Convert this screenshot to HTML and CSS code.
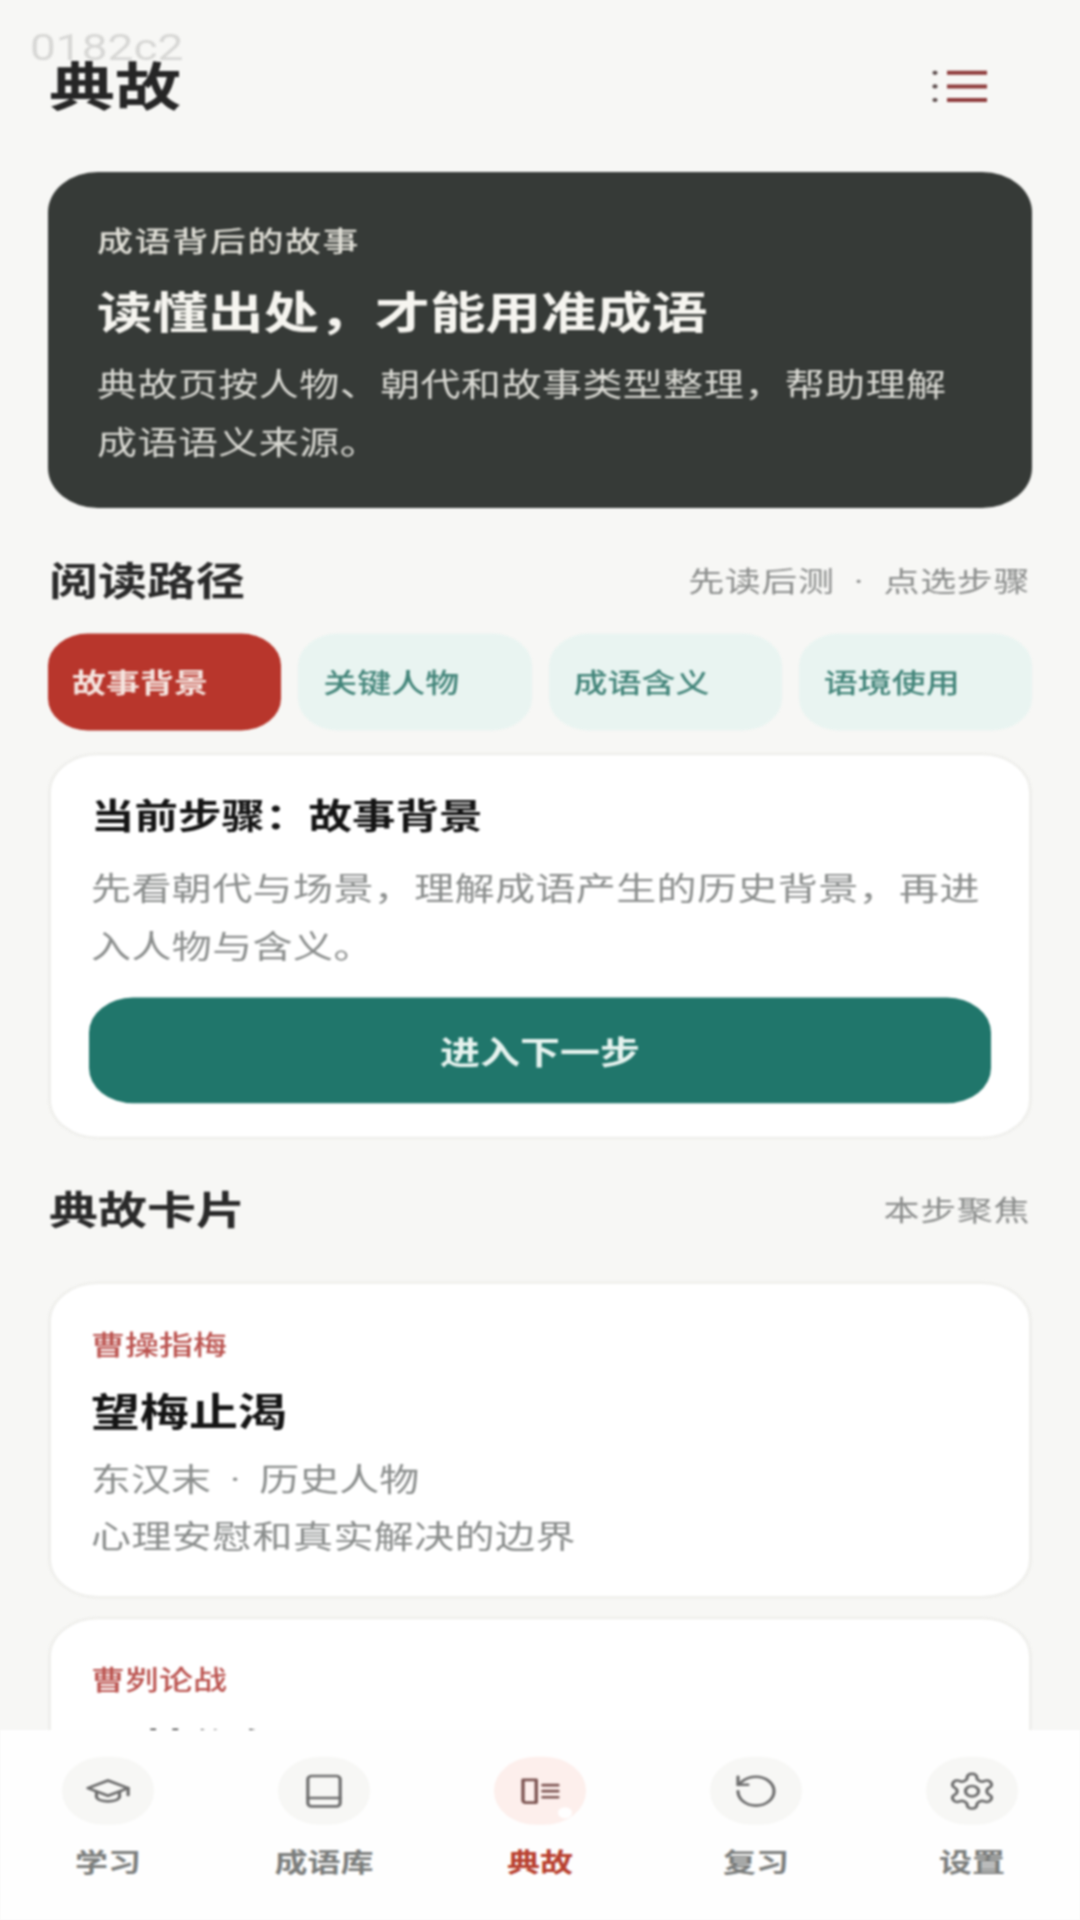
FILE: index.html
```html
<!DOCTYPE html>
<html lang="zh-CN">
<head>
<meta charset="utf-8">
<title>典故</title>
<link rel="stylesheet" href="styles.css">
</head>
<body>
<div class="page">
  <div class="ghost">0182c2</div>
  <main class="scroll">
    <header class="top">
      <h1 class="page-title">典故</h1>
      <svg class="menu" viewBox="0 0 56 44" aria-hidden="true">
        <circle class="menu-dot" cx="4" cy="5" r="2.6"/><circle class="menu-dot" cx="4" cy="22" r="2.6"/><circle class="menu-dot" cx="4" cy="39" r="2.6"/>
        <path class="menu-line" d="M16 5h40M16 22h40M16 39h40"/>
      </svg>
    </header>

    <section class="hero">
      <p class="hero-eyebrow">成语背后的故事</p>
      <h2 class="hero-title">读懂出处，才能用准成语</h2>
      <p class="hero-body">典故页按人物、朝代和故事类型整理，帮助理解成语语义来源。</p>
    </section>

    <div class="sec-head sec-first">
      <h2 class="sec-title">阅读路径</h2>
      <span class="sec-note">先读后测 · 点选步骤</span>
    </div>

    <div class="tabs">
      <div class="tab tab-on">故事背景</div>
      <div class="tab">关键人物</div>
      <div class="tab">成语含义</div>
      <div class="tab">语境使用</div>
    </div>

    <section class="card step">
      <h3 class="step-title">当前步骤：故事背景</h3>
      <p class="step-body">先看朝代与场景，理解成语产生的历史背景，再进入人物与含义。</p>
      <div class="step-btn">进入下一步</div>
    </section>

    <div class="sec-head sec-second">
      <h2 class="sec-title">典故卡片</h2>
      <span class="sec-note">本步聚焦</span>
    </div>

    <section class="card story">
      <p class="story-tag">曹操指梅</p>
      <h3 class="story-title">望梅止渴</h3>
      <p class="story-meta">东汉末 · 历史人物</p>
      <p class="story-desc">心理安慰和真实解决的边界</p>
    </section>

    <section class="card story">
      <p class="story-tag">曹刿论战</p>
      <h3 class="story-title">一鼓作气</h3>
    </section>
  </main>

  <nav class="nav">
    <div class="nav-item">
      <div class="nav-icon">
        <svg class="ico ico-cap" viewBox="0 0 48 36"><path d="M3 14 24 4l21 10-21 10z"/><path d="M12 19v7c3 7 21 7 24 0v-7"/><path d="M45 14v9"/></svg>
      </div>
      <span class="nav-label">学习</span>
    </div>
    <div class="nav-item">
      <div class="nav-icon">
        <svg class="ico ico-book" viewBox="0 0 40 46"><rect x="3" y="3" width="34" height="40" rx="4"/><path d="M3 32h34"/></svg>
      </div>
      <span class="nav-label">成语库</span>
    </div>
    <div class="nav-item nav-on">
      <div class="nav-icon">
        <svg class="ico ico-story" viewBox="0 0 42 36"><path d="M3 3h14v30H6q-3 0-3-3z"/><path d="M24 10h16M24 18h16M24 26h16"/></svg>
        <span class="nav-dot"></span>
      </div>
      <span class="nav-label">典故</span>
    </div>
    <div class="nav-item">
      <div class="nav-icon">
        <svg class="ico ico-redo" viewBox="0 0 24 24"><path d="M3 12a9 9 0 1 0 9-9 9.75 9.75 0 0 0-6.74 2.74L3 8"/><path d="M3 3v5h5"/></svg>
      </div>
      <span class="nav-label">复习</span>
    </div>
    <div class="nav-item">
      <div class="nav-icon">
        <svg class="ico ico-gear" viewBox="0 0 24 24"><path d="M12.22 2h-.44a2 2 0 0 0-2 2v.18a2 2 0 0 1-1 1.73l-.43.25a2 2 0 0 1-2 0l-.15-.08a2 2 0 0 0-2.73.73l-.22.38a2 2 0 0 0 .73 2.73l.15.1a2 2 0 0 1 1 1.72v.51a2 2 0 0 1-1 1.74l-.15.09a2 2 0 0 0-.73 2.73l.22.38a2 2 0 0 0 2.73.73l.15-.08a2 2 0 0 1 2 0l.43.25a2 2 0 0 1 1 1.73V20a2 2 0 0 0 2 2h.44a2 2 0 0 0 2-2v-.18a2 2 0 0 1 1-1.73l.43-.25a2 2 0 0 1 2 0l.15.08a2 2 0 0 0 2.73-.73l.22-.39a2 2 0 0 0-.73-2.73l-.15-.08a2 2 0 0 1-1-1.74v-.5a2 2 0 0 1 1-1.74l.15-.09a2 2 0 0 0 .73-2.73l-.22-.38a2 2 0 0 0-2.73-.73l-.15.08a2 2 0 0 1-2 0l-.43-.25a2 2 0 0 1-1-1.73V4a2 2 0 0 0-2-2z"/><circle cx="12" cy="12" r="3"/></svg>
      </div>
      <span class="nav-label">设置</span>
    </div>
  </nav>
</div>
</body>
</html>
```
FILE: styles.css
```css
* { box-sizing: border-box; margin: 0; padding: 0; }
html, body { width: 1080px; height: 1920px; overflow: hidden; background: #f7f7f5; }
body { font-family: "Noto Sans CJK SC", "Noto Sans", sans-serif; color: #1c1c1c; }

/* The source capture is a 1080x2400 screen squeezed to 1920 tall. */
.page {
  position: relative;
  width: 1080px;
  height: 2400px;
  margin-bottom: -480px;
  overflow: hidden;
  transform: scaleY(0.8);
  transform-origin: 0 0;
  filter: blur(1px);
}
.ghost {
  position: absolute;
  left: 30px;
  top: 27px;
  font: 400 46px/64px Roboto, sans-serif;
  color: #d7d7d5;
}
.scroll { position: relative; padding: 0 48px; }

.top { display: flex; justify-content: space-between; align-items: center; height: 215px; }
.page-title { font-size: 66px; line-height: 80px; font-weight: 700; color: #262626; margin: -9px 0 0 1px; }
.menu { width: 56px; height: 44px; margin-right: 45px; }
.menu-dot { fill: #5a4a4a; }
.menu-line { fill: none; stroke: #8e3a3a; stroke-width: 5; }

.hero { background: #363a37; border-radius: 50px; padding: 59px 49px 46px; height: 420px; }
.hero-eyebrow { font-size: 36px; line-height: 50px; letter-spacing: 1.6px; font-weight: 500; color: #dfded6; }
.hero-title { font-size: 55.5px; line-height: 72px; font-weight: 700; color: #f6f5f0; margin-top: 27px; }
.hero-body { font-size: 40px; line-height: 72px; letter-spacing: 0.45px; color: #d9d9d3; margin-top: 19px; }

.sec-head { display: flex; justify-content: space-between; align-items: center; height: 70px; }
.sec-first { margin-top: 53px; }
.sec-second { margin-top: 50px; }
.sec-title { font-size: 49px; line-height: 70px; font-weight: 700; color: #2a2a2a; margin-left: 1px; }
.sec-note { font-family: Roboto, "Noto Sans CJK SC", sans-serif; font-size: 36px; line-height: 50px; letter-spacing: 0.6px; word-spacing: 10px; color: #8b8d8c; margin: 9px 2px 0 0; }

.tabs { display: grid; grid-template-columns: repeat(4, 1fr); gap: 17px; margin-top: 34px; }
.tab {
  height: 121px;
  display: flex;
  align-items: center;
  padding: 0 0 3px 25px;
  border-radius: 40px;
  background: #e9f4f1;
  color: #43857a;
  font-size: 34px;
  font-weight: 500;
}
.tab-on { background: #b8362c; color: #f5e4df; font-weight: 700; padding-left: 24px; }

.card { background: #fff; border: 3px solid #efefec; border-radius: 50px; }
.step { margin-top: 28px; height: 483px; padding: 44px 38px 38px 40px; }
.step-title { font-size: 43.5px; line-height: 60px; font-weight: 700; color: #141414; }
.step-body { font-size: 40px; line-height: 72px; letter-spacing: 0.4px; color: #8b8e8d; margin-top: 24px; }
.step-btn {
  margin: 31px 0 0 -2px;
  height: 132px;
  border-radius: 44px;
  background: #20766b;
  color: #e6f3ef;
  display: flex;
  align-items: center;
  justify-content: center;
  font-size: 40px;
  font-weight: 700;
}

.story { height: 396px; padding: 50px 40px 0; margin-top: 23px; }
.sec-second + .story { margin-top: 58px; }
.story-tag { font-size: 34px; line-height: 50px; font-weight: 500; color: #bb5450; }
.story-title { font-size: 49px; line-height: 66px; font-weight: 700; color: #141414; margin-top: 24px; }
.story-meta { font-family: Roboto, "Noto Sans CJK SC", sans-serif; font-size: 40px; line-height: 60px; word-spacing: 9px; color: #8a8d8c; margin-top: 26px; }
.story-desc { font-size: 40px; line-height: 60px; letter-spacing: 0.4px; color: #8a8d8c; margin-top: 7px; }

.nav {
  position: absolute;
  left: 0;
  right: 0;
  bottom: 0;
  height: 237px;
  padding-top: 33px;
  background: #fefefe;
  display: grid;
  grid-template-columns: repeat(5, 1fr);
}
.nav-item { display: flex; flex-direction: column; align-items: center; }
.nav-icon {
  position: relative;
  width: 92px;
  height: 85px;
  border-radius: 42px;
  background: #f7f7f5;
  display: flex;
  align-items: center;
  justify-content: center;
}
.nav-label { font-size: 33px; line-height: 50px; margin-top: 20px; font-weight: 700; color: #7c7e7d; }
.nav-on .nav-icon { background: #fdefec; }
.nav-on .nav-label { color: #b8402f; }
.nav-dot {
  position: absolute;
  left: 64px;
  top: 63px;
  width: 14px;
  height: 14px;
  border-radius: 50%;
  background: #fff;
}
.ico { fill: none; stroke: #6e6e6e; stroke-width: 3; stroke-linecap: round; stroke-linejoin: round; }
.ico-cap { width: 46px; height: 36px; stroke-width: 3.4; }
.ico-book { width: 38px; height: 44px; stroke-width: 3.4; }
.ico-story { width: 40px; height: 34px; stroke: #7d5552; stroke-width: 3.6; }
.ico-redo { width: 48px; height: 48px; stroke-width: 1.6; }
.ico-gear { width: 52px; height: 52px; stroke-width: 1.5; }
```
